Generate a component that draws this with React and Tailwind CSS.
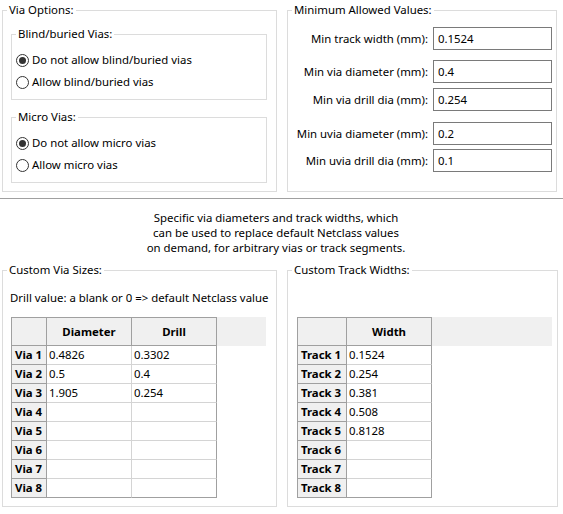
import React from "react";

function GroupBox({ title, className = "", children }) {
  return (
    <fieldset className={`m-0 p-0 min-w-0 border border-[#dcdcdc] ${className}`}>
      <legend className="ml-[4px] px-[2px] leading-[16px]">{title}</legend>
      {children}
    </fieldset>
  );
}

function Radio({ checked, label }) {
  return (
    <div className="flex h-[22px] items-center">
      <div className="flex h-[13px] w-[13px] items-center justify-center rounded-full border border-[#333333] bg-white">
        {checked && <div className="h-[7px] w-[7px] rounded-full bg-[#333333]" />}
      </div>
      <span className="ml-[3px]">{label}</span>
    </div>
  );
}

function ValueRow({ label, value, className = "" }) {
  return (
    <div className={`flex items-center justify-end pr-[4px] ${className}`}>
      <span>{label}</span>
      <div className="ml-[5px] flex h-[23px] w-[119px] items-center border border-[#7a7a7a] pl-[4px]">
        {value}
      </div>
    </div>
  );
}

function SizeGrid({ labelWidth, columns, rows }) {
  return (
    <div className="flex flex-col">
      <div className="flex h-[29px] w-[255px] bg-[#f0f0f0]">
        <div className={`${labelWidth} border border-[#a0a0a0]`} />
        {columns.map((c) => (
          <div
            key={c}
            className="flex w-[85px] items-center justify-center border-y border-r border-[#a0a0a0] font-bold"
          >
            {c}
          </div>
        ))}
      </div>
      {rows.map((r, ri) => {
        const last = ri === rows.length - 1;
        return (
          <div key={r.label} className="flex h-[19px]">
            <div
              className={`${labelWidth} flex items-center border-x border-b border-[#a0a0a0] bg-[#f0f0f0] pl-[3px] font-bold`}
            >
              {r.label}
            </div>
            {columns.map((c, ci) => {
              const lastCol = ci === columns.length - 1;
              return (
                <div
                  key={c}
                  className={`flex w-[85px] items-center border-b border-r pl-[2px] ${
                    last ? "border-b-[#a0a0a0]" : "border-b-[#d4d4d4]"
                  } ${lastCol ? "border-r-[#a0a0a0]" : "border-r-[#d4d4d4]"}`}
                >
                  {r.values[ci] || ""}
                </div>
              );
            })}
          </div>
        );
      })}
    </div>
  );
}

const viaRows = [
  { label: "Via 1", values: ["0.4826", "0.3302"] },
  { label: "Via 2", values: ["0.5", "0.4"] },
  { label: "Via 3", values: ["1.905", "0.254"] },
  { label: "Via 4", values: [] },
  { label: "Via 5", values: [] },
  { label: "Via 6", values: [] },
  { label: "Via 7", values: [] },
  { label: "Via 8", values: [] },
];

const trackRows = [
  { label: "Track 1", values: ["0.1524"] },
  { label: "Track 2", values: ["0.254"] },
  { label: "Track 3", values: ["0.381"] },
  { label: "Track 4", values: ["0.508"] },
  { label: "Track 5", values: ["0.8128"] },
  { label: "Track 6", values: [] },
  { label: "Track 7", values: [] },
  { label: "Track 8", values: [] },
];

export default function App() {
  return (
    <div className="h-[514px] w-[563px] overflow-hidden bg-white font-['Noto_Sans',sans-serif] text-[11.4px] leading-[16px] text-black">
      {/* Top options */}
      <div className="flex pl-[2px] pt-[2px]">
        <GroupBox title="Via Options:" className="h-[190px] w-[275px]">
          <GroupBox title="Blind/buried Vias:" className="ml-[8px] mt-[8px] h-[74px] w-[256px]">
            <div className="pl-[4px] pt-[7px]">
              <Radio checked label="Do not allow blind/buried vias" />
              <Radio label="Allow blind/buried vias" />
            </div>
          </GroupBox>
          <GroupBox title="Micro Vias:" className="ml-[8px] mt-[9px] h-[74px] w-[256px]">
            <div className="pl-[4px] pt-[7px]">
              <Radio checked label="Do not allow micro vias" />
              <Radio label="Allow micro vias" />
            </div>
          </GroupBox>
        </GroupBox>

        <GroupBox title="Minimum Allowed Values:" className="ml-[10px] h-[190px] w-[270px]">
          <ValueRow className="mt-[9px]" label="Min track width (mm):" value="0.1524" />
          <ValueRow className="mt-[10px]" label="Min via diameter (mm):" value="0.4" />
          <ValueRow className="mt-[5px]" label="Min via drill dia (mm):" value="0.254" />
          <ValueRow className="mt-[11px]" label="Min uvia diameter (mm):" value="0.2" />
          <ValueRow className="mt-[4px]" label="Min uvia drill dia (mm):" value="0.1" />
        </GroupBox>
      </div>

      <div className="mt-[6px] h-px w-full bg-[#a0a0a0]" />

      <p className="mt-[11px] pr-[11px] text-center leading-[15px]">
        Specific via diameters and track widths, which
        <br />
        can be used to replace default Netclass values
        <br />
        on demand, for arbitrary vias or track segments.
      </p>

      {/* Custom sizes */}
      <div className="mt-[7px] flex pl-[2px]">
        <GroupBox title="Custom Via Sizes:" className="h-[245px] w-[275px]">
          <div className="ml-[7px] mt-[12px]">Drill value: a blank or 0 =&gt; default Netclass value</div>
          <div className="ml-[8px] mt-[11px]">
            <SizeGrid labelWidth="w-[36px]" columns={["Diameter", "Drill"]} rows={viaRows} />
          </div>
        </GroupBox>
        <GroupBox title="Custom Track Widths:" className="ml-[10px] h-[245px] w-[271px]">
          <div className="ml-[9px] mt-[39px]">
            <SizeGrid labelWidth="w-[50px]" columns={["Width"]} rows={trackRows} />
          </div>
        </GroupBox>
      </div>
    </div>
  );
}
